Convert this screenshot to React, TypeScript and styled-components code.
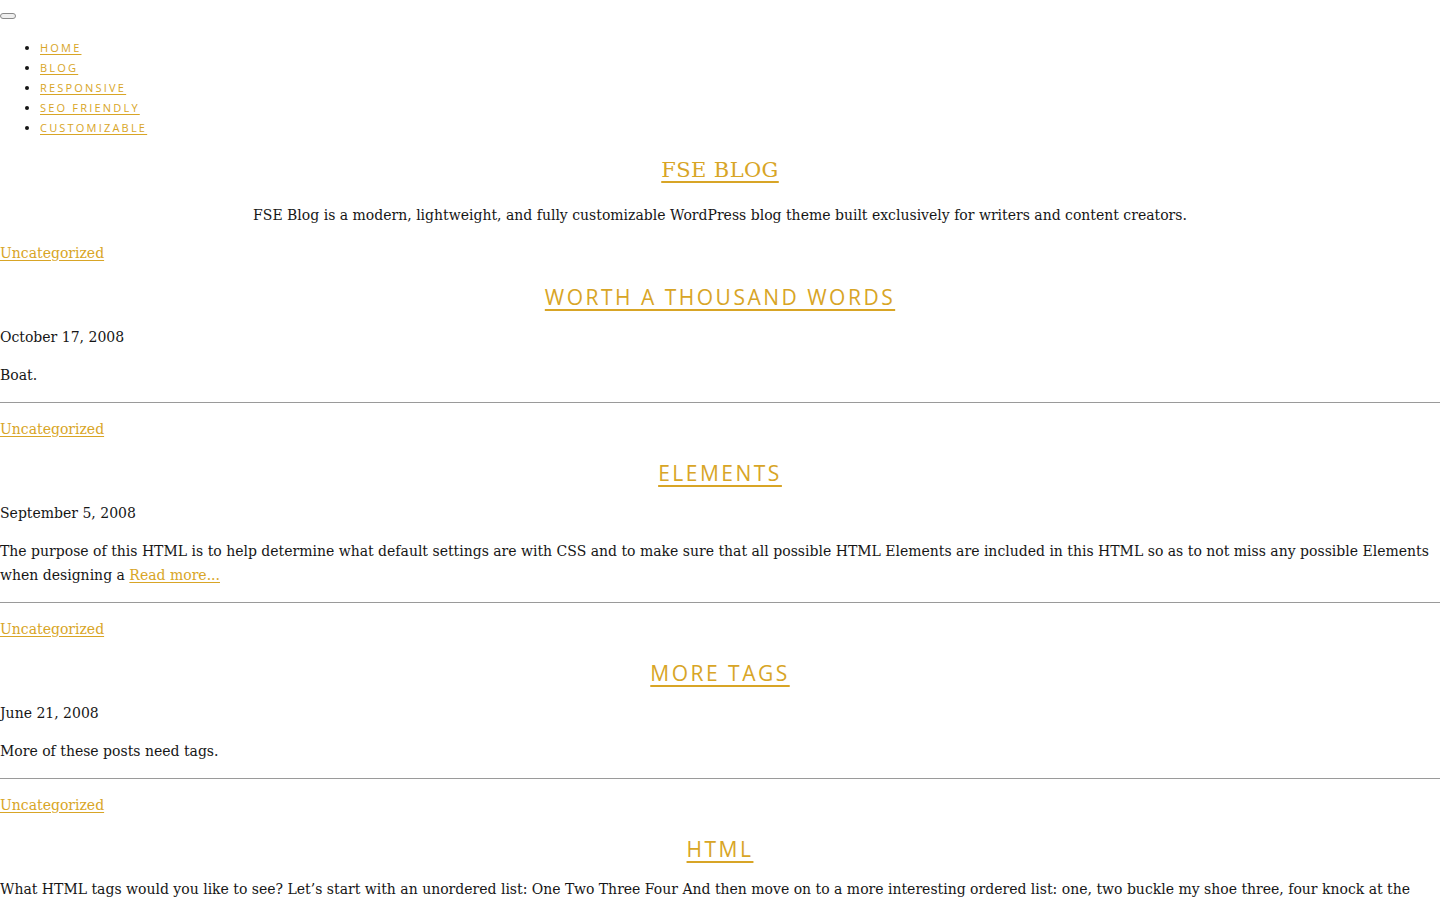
import React from "react";
import styled, { createGlobalStyle } from "styled-components";

const GOLD = "#d8a526";
const INK = "#161616";

const GlobalStyle = createGlobalStyle`
  html, body {
    margin: 0;
    padding: 0;
    background: #fff;
  }
  body {
    font-family: "DejaVu Serif", "Liberation Serif", serif;
    font-size: 14px;
    line-height: 24px;
    color: ${INK};
  }
`;

const Header = styled.header`
  padding-top: 13px;
`;

const MenuToggle = styled.button`
  display: block;
  margin: 0;
  width: 16px;
  height: 6px;
  padding: 0;
  border: 1px solid #8a8a8a;
  border-radius: 3px;
  background: #efefef;
`;

const NavList = styled.ul`
  margin: 18px 0 0;
  padding-left: 40px;
  list-style: disc;
`;

const NavItem = styled.li`
  height: 20px;
  line-height: 20px;
  font-size: 14px;
`;

const NavLink = styled.a`
  font-family: "Open Sans", "Liberation Sans", sans-serif;
  font-size: 11px;
  letter-spacing: 2.2px;
  text-transform: uppercase;
  color: ${GOLD};
  text-decoration: underline;
  text-underline-offset: 2px;
`;

const SiteTitle = styled.h1`
  margin: 18px 0 0;
  text-align: center;
  font-family: "DejaVu Serif", "Liberation Serif", serif;
  font-weight: 400;
  font-size: 21px;
  line-height: 30px;
  letter-spacing: 0.4px;

  a {
    color: ${GOLD};
    text-decoration: underline;
    text-decoration-thickness: 2px;
    text-underline-offset: 4px;
  }
`;

const Tagline = styled.p`
  margin: 18px 0 0;
  text-align: center;
`;

const Post = styled.article`
  margin-top: 14px;
`;

const Category = styled.a`
  display: inline-block;
  color: ${GOLD};
  text-decoration: underline;
  text-underline-offset: 2px;
`;

const PostTitle = styled.h2`
  margin: 18px 0 0;
  text-align: center;
  font-family: "Open Sans", "Liberation Sans", sans-serif;
  font-weight: 400;
  font-size: 21px;
  line-height: 28px;
  letter-spacing: 2.5px;
  text-transform: uppercase;

  a {
    color: ${GOLD};
    text-decoration: underline;
    text-decoration-thickness: 2px;
    text-underline-offset: 4px;
  }
`;

const PostDate = styled.div`
  margin-top: 14px;
`;

const Excerpt = styled.p`
  margin: 14px 0 0;
`;

const ReadMore = styled.a`
  color: ${GOLD};
  text-decoration: underline;
  text-underline-offset: 2px;
`;

const Divider = styled.hr`
  margin: 15px 0 0;
  border: 0;
  border-top: 1px solid #9a9a9a;
  height: 0;
`;

type PostData = {
  title: string;
  date?: string;
  excerpt: string;
  more?: boolean;
  last?: boolean;
};

const posts: PostData[] = [
  { title: "Worth a Thousand Words", date: "October 17, 2008", excerpt: "Boat." },
  {
    title: "Elements",
    date: "September 5, 2008",
    excerpt:
      "The purpose of this HTML is to help determine what default settings are with CSS and to make sure that all possible HTML Elements are included in this HTML so as to not miss any possible Elements when designing a",
    more: true,
  },
  { title: "More Tags", date: "June 21, 2008", excerpt: "More of these posts need tags." },
  {
    title: "HTML",
    excerpt:
      "What HTML tags would you like to see? Let\u2019s start with an unordered list: One Two Three Four And then move on to a more interesting ordered list: one, two buckle my shoe three, four knock at the door five, six pick up sticks",
    last: true,
  },
];

const menu = ["Home", "Blog", "Responsive", "SEO Friendly", "Customizable"];

export default function App() {
  return (
    <>
      <GlobalStyle />
      <Header>
        <MenuToggle aria-label="Menu" />
        <NavList>
          {menu.map((m) => (
            <NavItem key={m}>
              <NavLink href="#">{m}</NavLink>
            </NavItem>
          ))}
        </NavList>
        <SiteTitle>
          <a href="#">FSE BLOG</a>
        </SiteTitle>
        <Tagline>
          FSE Blog is a modern, lightweight, and fully customizable WordPress blog theme built
          exclusively for writers and content creators.
        </Tagline>
      </Header>
      <main>
        {posts.map((p) => (
          <Post key={p.title}>
            <Category href="#">Uncategorized</Category>
            <PostTitle>
              <a href="#">{p.title}</a>
            </PostTitle>
            {p.date && <PostDate>{p.date}</PostDate>}
            <Excerpt>
              {p.excerpt}
              {p.more && (
                <>
                  {" "}
                  <ReadMore href="#">Read more...</ReadMore>
                </>
              )}
            </Excerpt>
            {!p.last && <Divider />}
          </Post>
        ))}
      </main>
    </>
  );
}
